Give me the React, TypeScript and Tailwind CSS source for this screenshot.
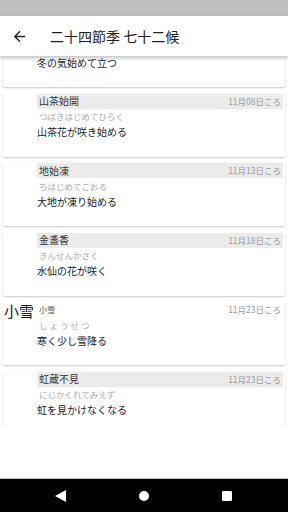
import React from 'react'

type Item = {
  name: string
  kana: string
  desc: string
  date: string
  sekki?: boolean
}

const ITEMS: Item[] = [
  { name: '立冬', kana: 'りっとう', desc: '冬の気始めて立つ', date: '11月08日ころ', sekki: true },
  { name: '山茶始開', kana: 'つばきはじめてひらく', desc: '山茶花が咲き始める', date: '11月08日ころ' },
  { name: '地始凍', kana: 'ちはじめてこおる', desc: '大地が凍り始める', date: '11月13日ころ' },
  { name: '金盞香', kana: 'きんせんかさく', desc: '水仙の花が咲く', date: '11月18日ころ' },
  { name: '小雪', kana: 'しょうせつ', desc: '寒く少し雪降る', date: '11月23日ころ', sekki: true },
  { name: '虹蔵不見', kana: 'にじかくれてみえず', desc: '虹を見かけなくなる', date: '11月23日ころ' },
]

const font = { fontFamily: '"Noto Sans CJK JP", "Noto Sans", sans-serif' }

function Card({ item }: { item: Item }) {
  return (
    <div className="mx-[3px] h-[64px] shrink-0 flex rounded-[2px] bg-white shadow-[0_1px_2px_rgba(0,0,0,0.22)]">
      <div className="w-[34px] shrink-0 text-[15px] leading-[20px] text-[#222] pl-[1px]">
        {item.sekki ? item.name : ''}
      </div>
      <div className="flex-1 min-w-0 pr-[2px] pt-[1px]">
        <div
          className={`h-[15px] flex items-center justify-between px-[2px] ${
            item.sekki ? 'bg-white' : 'bg-[#ebebeb]'
          }`}
        >
          <span
            className={
              item.sekki
                ? 'text-[8px] leading-none text-[#555]'
                : 'text-[10px] leading-none text-[#333]'
            }
          >
            {item.name}
          </span>
          <span className="text-[8.5px] leading-none text-[#9a9a9a]">{item.date}</span>
        </div>
        <div
          className={`h-[16px] flex items-center pl-[2px] text-[8.5px] text-[#acacac] ${
            item.sekki ? 'tracking-[2px]' : ''
          }`}
        >
          {item.kana}
        </div>
        <div className="h-[14px] flex items-center text-[10px] text-[#222]">{item.desc}</div>
      </div>
    </div>
  )
}

export default function App() {
  return (
    <div className="w-[288px] h-[512px] flex flex-col bg-white overflow-hidden" style={font}>
      {/* status bar */}
      <div className="h-[16px] shrink-0 bg-[#bfbfbf]" />

      {/* app bar */}
      <div className="relative z-10 h-[40px] shrink-0 flex items-center bg-white shadow-[0_2px_4px_rgba(0,0,0,0.25)]">
        <svg width="17" height="17" viewBox="0 0 24 24" className="ml-[11px] shrink-0">
          <path
            fill="#222"
            d="M20 11H7.83l5.59-5.59L12 4l-8 8 8 8 1.41-1.41L7.83 13H20v-2z"
          />
        </svg>
        <span className="ml-[22px] text-[14px] text-[#222]">二十四節季 七十二候</span>
      </div>

      {/* list */}
      <div className="h-[371px] shrink-0 overflow-hidden">
        <div className="-mt-[33px] flex flex-col gap-[5.5px]">
          {ITEMS.map(it => (
            <Card key={it.name} item={it} />
          ))}
        </div>
      </div>

      <div className="flex-1" />

      {/* nav bar */}
      <div className="h-[34px] shrink-0 bg-black border-t border-[#bbb] flex items-center justify-between pl-[55px] pr-[56px]">
        <svg width="11" height="12" viewBox="0 0 11 12">
          <polygon points="11,0 11,12 0,6" fill="#fff" />
        </svg>
        <span className="w-[10px] h-[10px] rounded-full bg-white" />
        <span className="w-[10px] h-[10px] rounded-[1px] bg-white" />
      </div>
    </div>
  )
}
